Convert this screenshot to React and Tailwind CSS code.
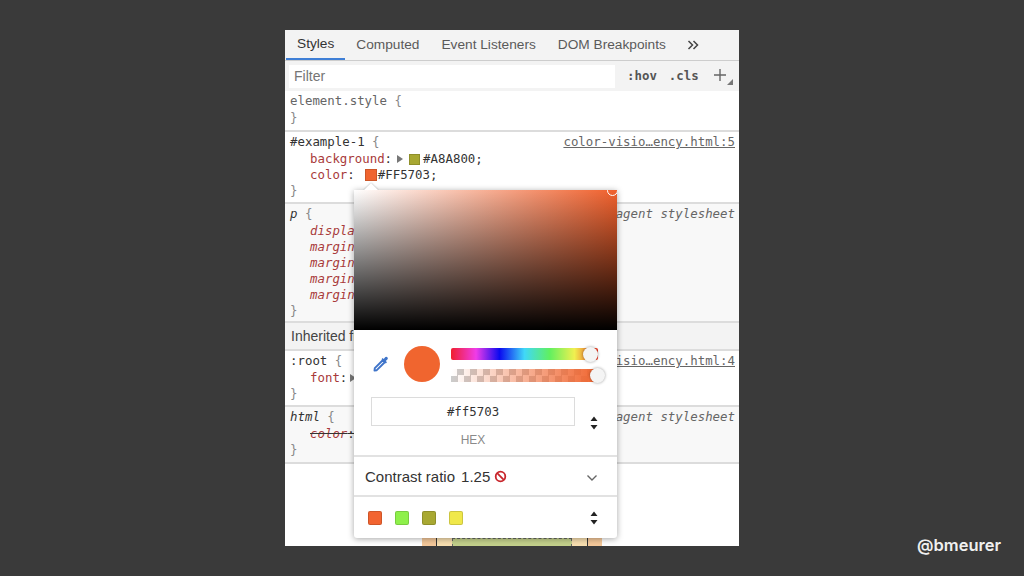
import React from "react";

const mono = "font-['DejaVu_Sans_Mono',monospace] text-[12.4px] leading-[16px]";

const Tab = ({ label, active }) => (
  <div className={`h-[30px] flex items-center px-[11px] text-[13.7px] ${active ? "text-[#333] border-b-2 border-[#3f7fd6]" : "text-[#5a5a5a]"}`}>
    {label}
  </div>
);

const Decl = ({ name, children, italic, strike }) => (
  <div className={`pl-[20px] whitespace-nowrap flex items-center ${strike ? "line-through decoration-[#333]" : ""}`}>
    <span className={`text-[#a83a3a] ${italic ? "italic" : ""}`}>{name}</span>
    {children}
  </div>
);

const Rule = ({ selector, link, italic, bg, children, className, muted }) => (
  <div className={`px-[5px] pt-[1px] shrink-0 ${mono} ${bg || "bg-white"} ${className || ""}`}>
    <div className="h-[18px] flex items-center justify-between whitespace-nowrap">
      <span className={muted ? "text-[#666]" : "text-[#333]"}>
        <span className={italic ? "italic" : ""}>{selector}</span> <span className="text-[#888]">{"{"}</span>
      </span>
      {link}
    </div>
    {children}
    <div className="text-[#888]">{"}"}</div>
  </div>
);

const Link = ({ children }) => <span className="text-[#666] underline">{children}</span>;
const Agent = () => <span className="text-[#666] italic">user agent stylesheet</span>;

const Updown = () => (
  <svg width="8" height="14" viewBox="0 0 8 14">
    <path d="M4 0.5 7.5 5H0.5Z M4 13.5 0.5 9H7.5Z" fill="#222" />
  </svg>
);

const swatches = ["#f26430", "#8ef04a", "#a8a832", "#f0e84a"];

const Popover = () => (
  <div className="absolute left-[69px] top-[160px] w-[263px] h-[348px] bg-white rounded-b-[3px] shadow-[0_1px_6px_rgba(0,0,0,0.35)] flex flex-col font-['Liberation_Sans',sans-serif]">
    {/* little arrow pointing at the swatch */}
    <div className="absolute left-[12px] -top-[5px] w-[10px] h-[10px] rotate-45 bg-white shadow-[0_0_2px_rgba(0,0,0,0.35)]" />
    <div className="relative h-[140px] shrink-0 overflow-hidden bg-[linear-gradient(to_right,#fff,#f0602c)]">
      <div className="absolute inset-0 bg-[linear-gradient(to_bottom,rgba(0,0,0,0),#000)]" />
      <div className="absolute right-[-1px] top-[-5px] w-[11px] h-[11px] rounded-full border border-white" />
    </div>
    <div className="flex items-center h-[67px] shrink-0 pl-[18px]">
      <svg width="18" height="18" viewBox="0 0 18 18" fill="none" className="shrink-0">
        <path d="M10.5 5.5 2.8 13.2 2.5 15.5 4.8 15.2 12.5 7.5Z" stroke="#3f74c9" strokeWidth="1.9" strokeLinejoin="round" />
        <path d="M9.5 4.2 13.8 8.5 15 7.3 13.8 6.1 15.6 4.3A1.6 1.6 0 0 0 13.4 2.1L11.7 3.9 10.6 3Z" fill="#3f74c9" />
      </svg>
      <div className="w-[36px] h-[36px] rounded-full bg-[#f0652f] ml-[14px] shrink-0 mt-[1px]" />
      <div className="ml-[11px] w-[147px] flex flex-col gap-[9px] mt-[3px]">
        <div className="relative h-[12px] rounded-[2px] bg-[linear-gradient(to_right,#f01f2f,#f03ce8_17%,#0a0af0_33%,#40d8f8_50%,#60f060_67%,#f0f050_84%,#f03020)]">
          <div className="absolute right-0 -top-[1px] w-[15px] h-[15px] rounded-full bg-[#f4f4f4] shadow-[0_0_3px_rgba(0,0,0,0.4)]" />
        </div>
        <div className="relative h-[13px] bg-[linear-gradient(to_right,rgba(242,101,47,0),#f0652f),repeating-conic-gradient(#ccc_0_25%,#fff_0_50%)] bg-[length:100%_100%,13px_13px]">
          <div className="absolute -right-[7px] -top-[1px] w-[15px] h-[15px] rounded-full bg-[#f4f4f4] shadow-[0_0_3px_rgba(0,0,0,0.4)]" />
        </div>
      </div>
    </div>
    <div className="flex items-start pl-[17px] pr-[19px] h-[58px] shrink-0">
      <div className="w-[204px]">
        <div className={`h-[29px] border border-[#dcdcdc] flex items-center justify-center text-[#333] ${mono}`}>#ff5703</div>
        <div className="text-center text-[12px] leading-[14px] text-[#8a8a8a] mt-[7px]">HEX</div>
      </div>
      <div className="ml-auto mt-[19px] flex"><Updown /></div>
    </div>
    <div className="flex items-center h-[40px] shrink-0 border-t-2 border-[#e2e2e2] pt-[3px] pl-[11px] pr-[19px] text-[15px] text-[#333]">
      <span>Contrast ratio</span>
      <span className="ml-[6px]">1.25</span>
      <svg width="13" height="13" viewBox="0 0 13 13" fill="none" className="ml-[4px] -mt-[2px]">
        <circle cx="6.5" cy="6.5" r="4.8" stroke="#c8262c" strokeWidth="1.8" />
        <path d="M3.2 3.2 9.8 9.8" stroke="#c8262c" strokeWidth="1.8" />
      </svg>
      <svg width="12" height="8" viewBox="0 0 12 8" fill="none" className="ml-auto">
        <path d="M1.5 1.5 6 6 10.5 1.5" stroke="#666" strokeWidth="1.4" />
      </svg>
    </div>
    <div className="flex items-center flex-1 border-t-2 border-[#e2e2e2] pl-[14px] pr-[19px]">
      <div className="flex gap-[13px]">
        {swatches.map((c) => (
          <div key={c} className="w-[14px] h-[14px] rounded-[2px] border border-black/15" style={{ backgroundColor: c }} />
        ))}
      </div>
      <div className="ml-auto flex"><Updown /></div>
    </div>
  </div>
);

export default function App() {
  return (
    <div className="w-[1024px] h-[576px] bg-[#3a3a3a] relative overflow-hidden pt-[30px] pl-[285px] font-['Liberation_Sans',sans-serif]">
      <div className="relative w-[454px] h-[516px] bg-white overflow-hidden flex flex-col">
        {/* Tabs */}
        <div className="h-[31px] shrink-0 bg-[#f3f3f3] border-b border-[#cdcdcd] flex items-start pl-[1px]">
          <Tab label="Styles" active />
          <Tab label="Computed" />
          <Tab label="Event Listeners" />
          <Tab label="DOM Breakpoints" />
          <svg width="12" height="10" viewBox="0 0 12 10" fill="none" className="ml-[10px] mt-[10px]">
            <path d="M1.5 1 5.5 5 1.5 9M6.5 1 10.5 5 6.5 9" stroke="#444" strokeWidth="1.5" />
          </svg>
        </div>
        {/* Filter */}
        <div className="h-[30px] shrink-0 bg-[#f3f3f3] flex items-center pl-[4px]">
          <div className="w-[326px] h-[23px] bg-white flex items-center pl-[5px] text-[14px] text-[#757575]">Filter</div>
          <span className={`ml-[12px] font-bold text-[#555] ${mono}`}>:hov</span>
          <span className={`ml-[12px] font-bold text-[#555] ${mono}`}>.cls</span>
          <div className="relative ml-[14px] w-[20px] h-[20px]">
            <svg width="14" height="14" viewBox="0 0 14 14" className="absolute left-0 top-[2px]">
              <path d="M7 1V13M1 7H13" stroke="#666" strokeWidth="1.4" />
            </svg>
            <div className="absolute right-0 bottom-[1px] w-0 h-0 border-l-[6px] border-l-transparent border-b-[6px] border-b-[#777]" />
          </div>
        </div>
        <Rule selector="element.style" muted className="h-[41px] border-b-2 border-[#dcdcdc]" />
        <Rule selector="#example-1" link={<Link>color-visio…ency.html:5</Link>} className="h-[72px] border-b-2 border-[#dcdcdc] pr-[4px]">
          <Decl name="background">
            <span className="text-[#333]">:</span>
            <span className="ml-[5px] w-0 h-0 border-y-[4px] border-y-transparent border-l-[6px] border-l-[#777]" />
            <span className="ml-[6px] w-[11px] h-[11px] bg-[#a8a832] border border-black/15" />
            <span className="ml-[3px] text-[#333]">#A8A800;</span>
          </Decl>
          <Decl name="color">
            <span className="text-[#333]">:</span>
            <span className="ml-[10px] w-[12px] h-[12px] bg-[#f0652f] border border-black/15" />
            <span className="ml-[1px] text-[#333]">#FF5703;</span>
          </Decl>
        </Rule>
        <Rule selector="p" italic link={<Agent />} bg="bg-[#f8f8f8]" className="h-[117px] pr-[4px]">
          <Decl name="displa" italic />
          <Decl name="margin" italic />
          <Decl name="margin" italic />
          <Decl name="margin" italic />
          <Decl name="margin" italic />
        </Rule>
        <div className="h-[30px] shrink-0 bg-[#f3f3f3] border-y-2 border-[#dcdcdc] flex items-center pl-[6px] text-[14px] text-[#444]">
          Inherited from html
        </div>
        <Rule selector=":root" link={<Link>color-visio…ency.html:4</Link>} className="h-[56px] border-b-2 border-[#dcdcdc] pr-[4px]">
          <Decl name="font">
            <span className="text-[#333]">:</span>
            <span className="ml-[3px] w-0 h-0 border-y-[4px] border-y-transparent border-l-[6px] border-l-[#777]" />
          </Decl>
        </Rule>
        <Rule selector="html" italic link={<Agent />} bg="bg-[#f8f8f8]" className="h-[57px] border-b-2 border-[#dcdcdc] pr-[4px]">
          <Decl name="color" italic strike><span className="text-[#333]">:</span></Decl>
        </Rule>
        {/* box model peeking out below the popover */}
        <div className="relative flex-1 bg-white">
          <div className="absolute left-[137px] bottom-0 w-[180px] h-[9px] bg-[#f4c89a] flex">
            <div className="w-[15px] border-r border-[#333]" />
            <div className="flex-1 bg-[#f8dfb0] px-[15px]">
              <div className="h-full mt-[1px] bg-[#c3d08b] border-x border-t border-dashed border-[#666]" />
            </div>
            <div className="w-[15px] border-l border-[#333]" />
          </div>
        </div>
        <Popover />
      </div>
      <div className="absolute right-[23px] bottom-[21px] text-[16.5px] leading-[20px] font-semibold text-[#f0f0f0] font-['Inter',sans-serif]">@bmeurer</div>
    </div>
  );
}
